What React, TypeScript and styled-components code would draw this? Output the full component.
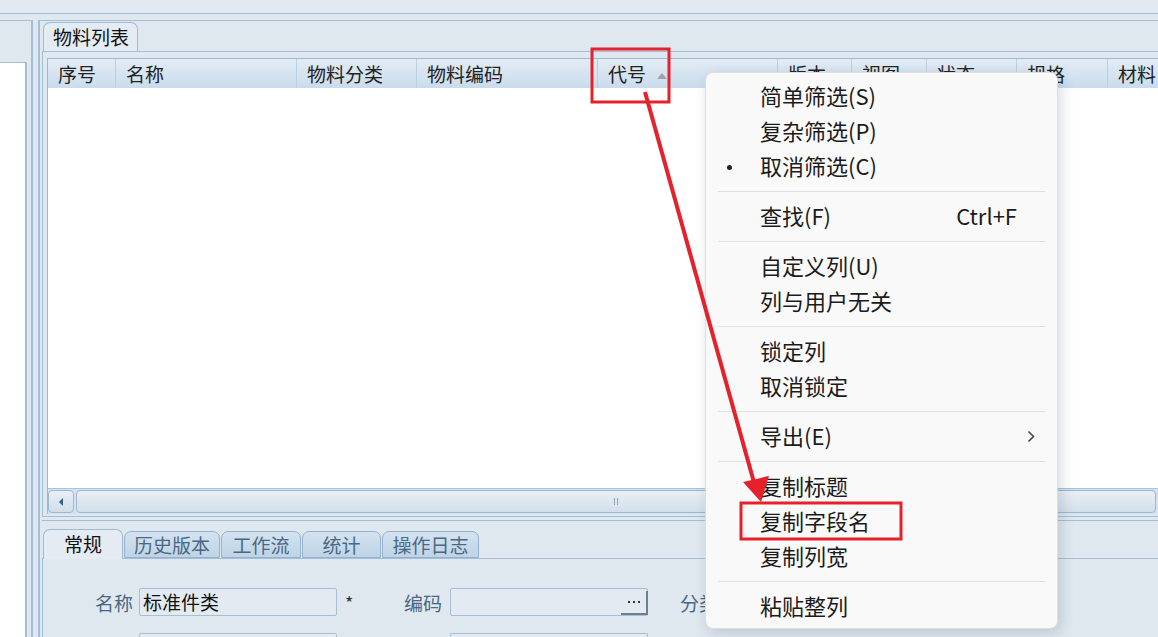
import React from 'react';
import styled, { createGlobalStyle } from 'styled-components';

const GlobalStyle = createGlobalStyle`
  html, body {
    margin: 0;
    padding: 0;
    background: #dfe7ef;
    overflow: hidden;
  }
  * {
    box-sizing: border-box;
  }
`;

const LINE = '#a3bed6';

const Screen = styled.div`
  position: relative;
  width: 1158px;
  height: 637px;
  overflow: hidden;
  background: #dfe7ef;
  font-family: "Noto Sans CJK SC", "Noto Sans", sans-serif;
  color: #222;
`;

const TopBand = styled.div`
  height: 14px;
  border-bottom: 1px solid ${LINE};
  background: #e2e9f1;
`;

const Main = styled.div`
  display: flex;
  gap: 5px;
  margin-top: 6px;
  height: 617px;
`;

const LeftPane = styled.div`
  width: 33px;
  border-top: 1px solid ${LINE};
  border-right: 2px solid ${LINE};
  padding-top: 41px;
`;

const LeftList = styled.div`
  width: 27px;
  height: 100%;
  background: #fff;
  border-top: 1px solid ${LINE};
  border-right: 2px solid ${LINE};
`;

const RightPane = styled.div`
  flex: 1;
  display: flex;
  flex-direction: column;
  border-top: 1px solid ${LINE};
  border-left: 2px solid ${LINE};
  padding-left: 2px;
  min-width: 0;
  & > * {
    flex-shrink: 0;
  }
`;

const TabStrip = styled.div<{ $h: number }>`
  display: flex;
  align-items: flex-end;
  height: ${p => p.$h}px;
  padding-left: 1px;
`;

const Tab = styled.div<{ $active?: boolean; $w: number }>`
  width: ${p => p.$w}px;
  height: ${p => (p.$active ? 30 : 27)}px;
  margin-right: 1px;
  margin-bottom: ${p => (p.$active ? -1 : 0)}px;
  border: 1px solid ${p => (p.$active ? '#9fbad2' : '#94b2cb')};
  border-bottom: ${p => (p.$active ? 'none' : `1px solid #94b2cb`)};
  border-radius: 7px 7px 0 0;
  background: ${p =>
    p.$active ? '#e4ebf3' : 'linear-gradient(#d3e2ef, #bed4e6)'};
  color: ${p => (p.$active ? '#111' : '#4a6884')};
  font-size: 19px;
  line-height: ${p => (p.$active ? 28 : 25)}px;
  text-align: center;
  position: relative;
  z-index: 1;
`;

const TitleTab = styled(Tab)`
  text-align: left;
  padding-left: 9px;
  height: 29px;
  line-height: 27px;
  margin-bottom: 0;
  border-bottom: none;
`;

const TabBody = styled.div`
  border-top: 1px solid ${LINE};
  border-left: 1px solid ${LINE};
  border-bottom: 1px solid ${LINE};
  padding: 6px 0 2px 4px;
`;

const Table = styled.div`
  display: flex;
  flex-direction: column;
  border-left: 1px solid #9fbad2;
  border-top: 1px solid #9fbad2;
`;

const HeaderRow = styled.div`
  display: flex;
  height: 29px;
  background: linear-gradient(#e3ecf5, #c9dcec);
`;

const HeaderCell = styled.div<{ $w: number }>`
  position: relative;
  flex: 0 0 ${p => p.$w}px;
  border-right: 1px solid #b9cfe2;
  padding-left: 10px;
  font-size: 19px;
  line-height: 29px;
  color: #222;
  white-space: nowrap;
`;

const SortMark = styled.span`
  position: absolute;
  left: 59px;
  top: 14px;
  width: 0;
  height: 0;
  border-left: 5px solid transparent;
  border-right: 5px solid transparent;
  border-bottom: 6px solid #a2a2a2;
`;

const TableBody = styled.div`
  height: 400px;
  background: #fff;
`;

const HScroll = styled.div`
  display: flex;
  gap: 2px;
  height: 26px;
  padding: 1px 0 1px 0;
  background: #d6e3ef;
  border-top: 1px solid #a9c3da;
`;

const ScrollButton = styled.div`
  width: 26px;
  border: 1px solid #9cb8d0;
  border-radius: 4px;
  background: linear-gradient(#e9eff6, #d0deea);
  display: flex;
  align-items: center;
  justify-content: center;
`;

const LeftArrow = styled.span`
  width: 0;
  height: 0;
  border-top: 4px solid transparent;
  border-bottom: 4px solid transparent;
  border-right: 4px solid #2f5f8c;
`;

const Thumb = styled.div`
  width: 1080px;
  border: 1px solid #9cb8d0;
  border-radius: 4px;
  background: linear-gradient(#e8eef5, #d2dfeb);
  display: flex;
  align-items: center;
  justify-content: center;
`;

const Grip = styled.span`
  width: 4px;
  height: 7px;
  border-left: 1px solid #8aa5bd;
  border-right: 1px solid #8aa5bd;
`;

const Splitter = styled.div`
  height: 4px;
  border-bottom: 1px solid ${LINE};
`;

const FormBody = styled.div`
  flex: 1;
  border-top: 1px solid ${LINE};
  border-left: 1px solid ${LINE};
  padding-top: 29px;
  display: flex;
  flex-direction: column;
  gap: 17px;
`;

const FormRow = styled.div`
  display: flex;
  align-items: center;
  height: 28px;
  flex-shrink: 0;
`;

const FieldLabel = styled.div<{ $w: number }>`
  width: ${p => p.$w}px;
  text-align: right;
  font-size: 19px;
  color: #4a6884;
  white-space: nowrap;
`;

const Input = styled.div<{ $gap: number }>`
  position: relative;
  width: 198px;
  height: 28px;
  margin-left: ${p => p.$gap}px;
  border: 1px solid #a5bfd6;
  border-radius: 2px;
  background: #e3eaf2;
  padding-left: 3px;
  font-size: 19px;
  line-height: 25px;
  color: #111;
`;

const BrowseButton = styled.span`
  position: absolute;
  right: -1px;
  top: 2px;
  width: 27px;
  height: 24px;
  border-right: 2px solid #6f7f8e;
  border-bottom: 2px solid #6f7f8e;
  display: flex;
  align-items: center;
  justify-content: center;
  gap: 3px;
`;

const Dot = styled.span`
  width: 2px;
  height: 2px;
  background: #333;
`;

const Star = styled.div`
  width: 67px;
  padding-left: 8px;
  font-size: 18px;
  color: #333;
`;

const Menu = styled.div`
  position: absolute;
  left: 705px;
  top: 72px;
  width: 353px;
  height: 557px;
  padding: 4px 0 3px;
  background: #f9f9f9;
  border: 1px solid #dedede;
  border-radius: 8px;
  box-shadow: 3px 4px 14px rgba(40, 60, 80, 0.18);
  font-size: 22px;
  color: #1b1b1b;
  z-index: 5;
`;

const MenuItem = styled.div`
  position: relative;
  display: flex;
  align-items: center;
  height: 35px;
  padding-left: 54px;
  padding-right: 38px;
  white-space: nowrap;
`;

const Bullet = styled.span`
  position: absolute;
  left: 21px;
  top: 18px;
  width: 5px;
  height: 5px;
  border-radius: 50%;
  background: #222;
`;

const Shortcut = styled.span`
  margin-left: auto;
  margin-right: 2px;
`;

const SubArrow = styled.svg`
  margin-left: auto;
  margin-right: -16px;
  margin-top: 3px;
`;

const Separator = styled.div`
  height: 15px;
  padding: 3px 12px 0;
  display: flex;
  align-items: center;
  &::after {
    content: '';
    flex: 1;
    height: 1px;
    background: #e0e0e0;
  }
`;

const Annotations = styled.svg`
  position: absolute;
  left: 0;
  top: 0;
  z-index: 10;
  pointer-events: none;
`;

const columns: { name: string; w: number; sort?: boolean }[] = [
  { name: '序号', w: 68 },
  { name: '名称', w: 181 },
  { name: '物料分类', w: 120 },
  { name: '物料编码', w: 181 },
  { name: '代号', w: 180, sort: true },
  { name: '版本', w: 74 },
  { name: '视图', w: 75 },
  { name: '状态', w: 90 },
  { name: '规格', w: 91 },
  { name: '材料', w: 120 },
];

const bottomTabs = [
  { name: '常规', w: 80, active: true },
  { name: '历史版本', w: 96 },
  { name: '工作流', w: 80 },
  { name: '统计', w: 79 },
  { name: '操作日志', w: 97 },
];

type Entry =
  | { sep: true }
  | { label: string; bullet?: boolean; shortcut?: string; sub?: boolean };

const menu: Entry[] = [
  { label: '简单筛选(S)' },
  { label: '复杂筛选(P)' },
  { label: '取消筛选(C)', bullet: true },
  { sep: true },
  { label: '查找(F)', shortcut: 'Ctrl+F' },
  { sep: true },
  { label: '自定义列(U)' },
  { label: '列与用户无关' },
  { sep: true },
  { label: '锁定列' },
  { label: '取消锁定' },
  { sep: true },
  { label: '导出(E)', sub: true },
  { sep: true },
  { label: '复制标题' },
  { label: '复制字段名' },
  { label: '复制列宽' },
  { sep: true },
  { label: '粘贴整列' },
];

export default function App() {
  return (
    <Screen>
      <GlobalStyle />
      <TopBand />
      <Main>
        <LeftPane>
          <LeftList />
        </LeftPane>
        <RightPane>
          <TabStrip $h={30}>
            <TitleTab $active $w={95}>物料列表</TitleTab>
          </TabStrip>
          <TabBody>
            <Table>
              <HeaderRow>
                {columns.map(c => (
                  <HeaderCell key={c.name} $w={c.w}>
                    {c.name}
                    {c.sort && <SortMark />}
                  </HeaderCell>
                ))}
              </HeaderRow>
              <TableBody />
              <HScroll>
                <ScrollButton>
                  <LeftArrow />
                </ScrollButton>
                <Thumb>
                  <Grip />
                </Thumb>
              </HScroll>
            </Table>
          </TabBody>
          <Splitter />
          <TabStrip $h={37}>
            {bottomTabs.map(t => (
              <Tab key={t.name} $active={t.active} $w={t.w}>
                {t.name}
              </Tab>
            ))}
          </TabStrip>
          <FormBody>
            <FormRow>
              <FieldLabel $w={90}>名称</FieldLabel>
              <Input $gap={6}>标准件类</Input>
              <Star>*</Star>
              <FieldLabel $w={38}>编码</FieldLabel>
              <Input $gap={8}>
                <BrowseButton>
                  <Dot />
                  <Dot />
                  <Dot />
                </BrowseButton>
              </Input>
              <FieldLabel $w={70}>分类</FieldLabel>
            </FormRow>
            <FormRow>
              <FieldLabel $w={90} />
              <Input $gap={6} />
              <Star />
              <FieldLabel $w={38} />
              <Input $gap={8} />
            </FormRow>
          </FormBody>
        </RightPane>
      </Main>

      <Menu>
        {menu.map((m, i) =>
          'sep' in m ? (
            <Separator key={i} />
          ) : (
            <MenuItem key={i}>
              {m.bullet && <Bullet />}
              {m.label}
              {m.shortcut && <Shortcut>{m.shortcut}</Shortcut>}
              {m.sub && (
                <SubArrow width="8" height="13" viewBox="0 0 8 13">
                  <polyline points="1.5,1.5 6.5,6.5 1.5,11.5" fill="none" stroke="#444" strokeWidth="1.6" />
                </SubArrow>
              )}
            </MenuItem>
          )
        )}
      </Menu>

      <Annotations width="1158" height="637" viewBox="0 0 1158 637">
        <rect x="592" y="49" width="77" height="53" fill="none" stroke="#e5222b" strokeWidth="3" />
        <rect x="741" y="503" width="160" height="36" fill="none" stroke="#e5222b" strokeWidth="3" />
        <line x1="645" y1="92" x2="755" y2="486" stroke="#e5222b" strokeWidth="4" />
        <polygon points="761,502 743,482 769,476" fill="#e5222b" />
      </Annotations>
    </Screen>
  );
}
